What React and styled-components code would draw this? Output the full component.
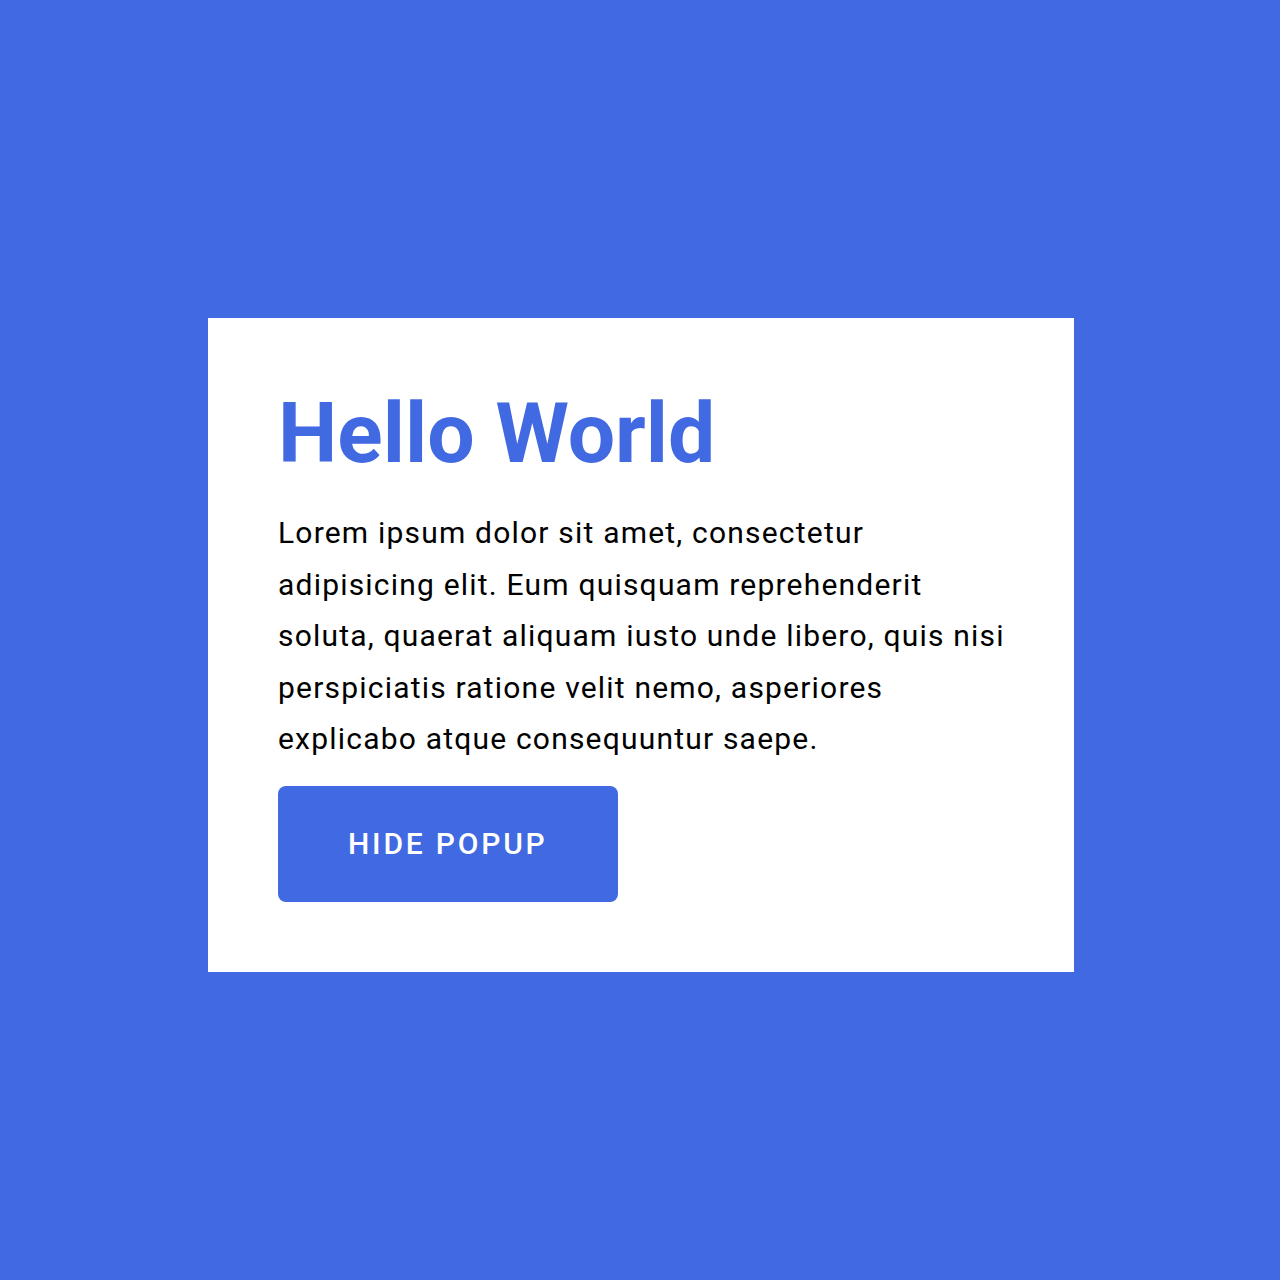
import React from 'react';
import styled, { createGlobalStyle } from 'styled-components';

const GlobalStyle = createGlobalStyle`
    html, body {
        margin: 0;
        padding: 0;
        background: #4169e1;
        font-family: Roboto, "Liberation Sans", sans-serif;
    }
`;

const Page = styled.div`
    display: flex;
    align-items: center;
    justify-content: center;
    min-height: 1280px;
    padding: 10px 0 0 2px;
    box-sizing: border-box;
`;

const Popup = styled.div`
    width: 866px;
    box-sizing: border-box;
    background: #fff;
    padding: 70px 62px 70px 70px;
`;

const Title = styled.h1`
    margin: 0;
    font-size: 84px;
    line-height: 1.1;
    font-weight: 700;
    color: #4169e1;
`;

const Text = styled.p`
    margin: 27px 0 21px;
    font-size: 30px;
    line-height: 51.5px;
    letter-spacing: 1.2px;
    color: #000;
`;

const Button = styled.button`
    display: block;
    height: 116px;
    padding: 0 70px;
    border: none;
    border-radius: 8px;
    background: #4169e1;
    color: #fff;
    font-family: Roboto, "Liberation Sans", sans-serif;
    font-size: 30px;
    font-weight: 500;
    letter-spacing: 2.8px;
    cursor: pointer;
`;

export default function App() {
    return (
        <>
            <GlobalStyle />
            <Page>
                <Popup>
                    <Title>Hello World</Title>
                    <Text>
                        Lorem ipsum dolor sit amet, consectetur adipisicing elit. Eum quisquam reprehenderit soluta, quaerat aliquam iusto unde libero, quis nisi perspiciatis ratione velit nemo, asperiores explicabo atque consequuntur saepe.
                    </Text>
                    <Button>HIDE POPUP</Button>
                </Popup>
            </Page>
        </>
    );
}
